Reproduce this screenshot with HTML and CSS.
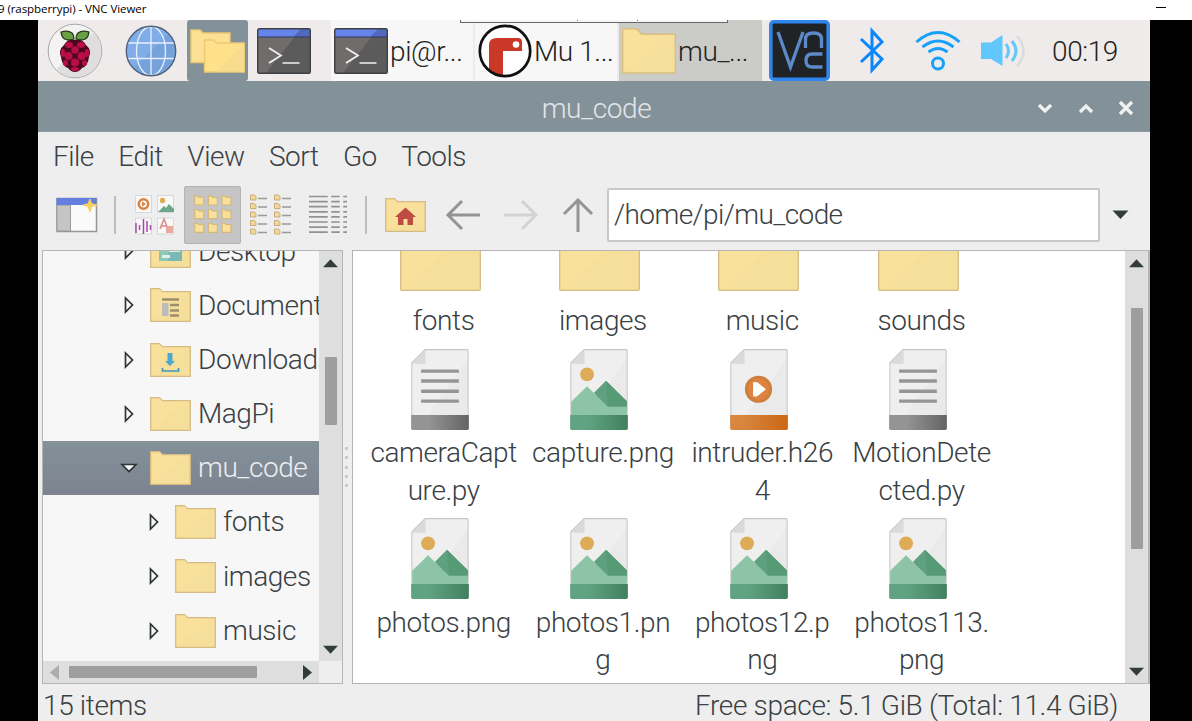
FILE: index.html
```
<!DOCTYPE html>
<html lang="en">
<head>
<meta charset="utf-8">
<title>VNC Viewer</title>
<link rel="stylesheet" href="styles.css">
</head>
<body>
<svg class="defs" width="0" height="0" aria-hidden="true">
  <defs>
    <linearGradient id="gFolder" x1="0" y1="0" x2="1" y2="1"><stop offset=".5" stop-color="#fae19b"/><stop offset=".5" stop-color="#f6de9b"/></linearGradient>
    <linearGradient id="gPage" x1="0" y1="0" x2="1" y2="1"><stop offset=".55" stop-color="#efefef"/><stop offset=".56" stop-color="#eaeaea"/></linearGradient>
    <linearGradient id="gGrey"><stop offset=".3" stop-color="#949494"/><stop offset="1" stop-color="#646464"/></linearGradient>
    <linearGradient id="gGreen"><stop offset=".3" stop-color="#60a382"/><stop offset="1" stop-color="#41805d"/></linearGradient>
    <linearGradient id="gOrange"><stop offset=".2" stop-color="#d88640"/><stop offset="1" stop-color="#cc6715"/></linearGradient>
  </defs>
  <symbol id="folder" viewBox="0 0 41 34"><path d="M.7 33.3V.7H9.500l3 3h27.800v29.600z" fill="url(#gFolder)" stroke="#d5bc85" stroke-width="1.300"/><path d="M1.500 1.500h8l3 3" fill="none" stroke="#efd58c"/></symbol>
  <symbol id="bigfolder" viewBox="0 0 81 69"><path d="M.7 2Q.7.700 2 .700H20l6 6H79q1.300 0 1.300 1.300V67q0 1.300-1.300 1.300H2Q.7 68.300.7 67z" fill="url(#gFolder)" stroke="#d5bc85" stroke-width="1.300"/></symbol>
  <symbol id="page" viewBox="0 0 58 82"><path d="M.6 14 14 .6H56q1.400 0 1.400 1.400V80H.6z" fill="url(#gPage)" stroke="#c6c6c6" stroke-width="1.200"/><path d="M1 14.500 14.500 1v14z" fill="#dadada"/></symbol>
  <symbol id="doc" viewBox="0 0 58 82"><use href="#page"/><path d="M10 22.200h38M10 32.200h38M10 42.500h38M10 52.500h38" stroke="#959595" stroke-width="3.300"/><path d="M0 66.500h58V80q0 1.500-1.500 1.500H1.500Q0 81.500 0 80z" fill="url(#gGrey)"/></symbol>
  <symbol id="image" viewBox="0 0 58 82"><use href="#page"/><circle cx="17" cy="25.500" r="7" fill="#deab56"/><path d="m24 44 12-12 21 20.500V62H36z" fill="#5fa07f"/><path d="m36 32 21 20.500V58H38z" fill="#569a76"/><path d="M1 53 17 37.500 38 58h19v9H1z" fill="#8dc3a7"/><path d="M0 66.500h58V80q0 1.500-1.500 1.500H1.500Q0 81.500 0 80z" fill="url(#gGreen)"/></symbol>
  <symbol id="video" viewBox="0 0 58 82"><use href="#page"/><circle cx="28.500" cy="40.500" r="12.200" fill="#df8340" stroke="#cf7f3c" stroke-width="3"/><path d="M23 33.500q3-1 5 .5l8 6.500-8 6.500q-2 1.500-5 .5z" fill="#fff"/><path d="M0 66.500h58V80q0 1.500-1.500 1.500H1.500Q0 81.500 0 80z" fill="url(#gOrange)"/></symbol>
  <symbol id="terminal" viewBox="0 0 54 46"><rect x=".7" y=".7" width="52.600" height="44.600" rx="1.500" fill="#5b5b5b"/><path d="M1 9V1h43L9 45H1z" fill="#716c6c"/><path d="M1 1h52v8H1z" fill="#6685ea"/><path d="M44 1h9v8H36z" fill="#5068bd"/><path d="M1 9h52" stroke="#34395c"/><rect x=".7" y=".7" width="52.600" height="44.600" rx="1.500" fill="none" stroke="#3f4045" stroke-width="1.400"/><path d="m12 20 12 7.500L12 35M25.500 35h17" fill="none" stroke="#f2f2f2" stroke-width="1.700"/></symbol>
  <symbol id="closed" viewBox="0 0 10 18"><path d="M1.500 2v14L8.500 9z" fill="#f7f7f7" stroke="#2d3536" stroke-width="1.700"/></symbol>
  <symbol id="tri" viewBox="0 0 16 9"><path d="M0 .5h16L8 9z" fill="#333c3d"/></symbol>
</svg>

<header class="titlebar"><span>9 (raspberrypi) - VNC Viewer</span><i class="minimise"></i></header>
<main class="screen">
  <nav class="taskbar">
    <div class="launch menu-btn"><svg width="56" height="56" viewBox="0 0 56 56"><circle cx="28" cy="28" r="26.800" fill="#f3f3f3" stroke="#a8a8a8"/><path d="M46.500 9A26.300 26.300 0 0 1 9 46.500z" fill="#dedede"/><path d="M27 16q-9 3-12-3l-1-4q7-2 11 1 2 2 2 6zM29 16q9 3 12-3l1-4q-7-2-11 1-2 2-2 6z" fill="#69a044" stroke="#27391d" stroke-width="1.300"/><path d="M28 17q8-1 11 5 6 5 3 12-1 9-7 11-3 4-7 4t-7-4q-6-2-7-11-3-7 3-12 3-6 11-5z" fill="#4c0820"/><g fill="#b90e45"><ellipse cx="22" cy="22" rx="4" ry="3"/><ellipse cx="34" cy="22" rx="4" ry="3"/><circle cx="28" cy="27" r="3.700"/><ellipse cx="16" cy="30" rx="2.300" ry="4"/><ellipse cx="40" cy="30" rx="2.300" ry="4"/><circle cx="21.500" cy="33" r="4"/><circle cx="34.500" cy="33" r="4"/><circle cx="28" cy="39.500" r="4"/><ellipse cx="18.500" cy="40" rx="2.500" ry="3"/><ellipse cx="37.500" cy="40" rx="2.500" ry="3"/><ellipse cx="28" cy="46" rx="4" ry="2"/></g></svg></div>
    <div class="launch web-btn"><svg width="52" height="52" viewBox="0 0 52 52"><circle cx="26" cy="26" r="24.700" fill="#80ade9"/><path d="M43.500 8.500A24.700 24.700 0 0 1 8.500 43.500z" fill="#75a2da"/><g fill="none" stroke="#e6f0fc" stroke-width="1.300"><path d="M26 1v50M3 18h46M3 33.500h46"/><ellipse cx="26" cy="26" rx="14.500" ry="24.500"/></g><circle cx="26" cy="26" r="24.700" fill="none" stroke="#50627a" stroke-width="1.400"/></svg></div>
    <div class="launch files-btn"><svg width="55" height="44" viewBox="0 0 55 44"><path d="M1 33.500V1h9l3 3h27v29.500z" fill="#fce094" stroke="#edc873" stroke-width="1.400"/><path d="M14.500 43V11h9l3 3h28v29z" fill="#ffe18c" stroke="#edc873" stroke-width="1.400"/><path d="M54 15v27.500H26z" fill="#f6dc8c"/></svg></div>
    <div class="launch term-btn"><svg width="54" height="46"><use href="#terminal"/></svg></div>
    <div class="task"><svg width="54" height="46"><use href="#terminal"/></svg><span>pi@r...</span></div>
    <div class="task task-mu"><svg width="54" height="54" viewBox="0 0 54 54"><circle cx="27" cy="27" r="25.200" fill="#fff"/><path d="M11 47V21q0-7 8-7h21q4 0 4 4v9H25V52q-8 0-14-5z" fill="#ca3828"/><circle cx="38" cy="20.500" r="3.300" fill="#fff"/><circle cx="27" cy="27" r="25.200" fill="none" stroke="#101010" stroke-width="2.700"/></svg><span>Mu 1...</span></div>
    <div class="task active"><svg width="54" height="46" viewBox="0 0 54 46"><path d="M.7 45V.7h14l5 5.500h33.600V45z" fill="url(#gFolder)" stroke="#d9c07f" stroke-width="1.400"/></svg><span>mu_...</span></div>
    <svg class="vnc" width="61" height="61" viewBox="0 0 61 61"><rect x="1.800" y="1.800" width="57.400" height="57.400" rx="3" fill="#202326" stroke="#2f86ec" stroke-width="3.600"/><g fill="none" stroke="#5c8ac8" stroke-width="3.300"><path d="m9 12 12.500 35L34 12"/><path d="M36.500 28V19q0-6 8-6t8 6v9M53.500 34H43q-6 0-6 6.500t6 6.500h10.500"/></g></svg>
    <svg class="bt" width="26" height="48" viewBox="0 0 26 48"><path d="m2 12 21 20-10 11V4l10 11L2 35" fill="none" stroke="#0c86fb" stroke-width="3"/></svg>
    <svg class="wifi" width="46" height="41" viewBox="0 0 46 41"><g fill="none" stroke="#16a0fa" stroke-width="3"><path d="M1.500 12Q23-7 44.500 12M7.500 17q15.500-12 31 0M13.500 22q9.500-7 19 0"/><circle cx="23" cy="33.500" r="5.500"/></g></svg>
    <svg class="sound" width="46" height="34" viewBox="0 0 46 34"><path d="M1 8.500h10L22.500 1v31L11 25H1z" fill="#62c7fc"/><path d="M26 10q5 7 0 14M32 7q8 10 0 20" fill="none" stroke="#62c7fc" stroke-width="3"/><path d="M37 2q13 15 0 30" fill="none" stroke="#d8dcde" stroke-width="2.500"/></svg>
    <span class="clock">00:19</span>
    <div class="viewer-tab"><i></i><i></i></div>
  </nav>

  <section class="window">
    <header class="window-title"><h1>mu_code</h1>
      <svg class="controls" width="100" height="18" viewBox="0 0 100 18" fill="none" stroke="#f0f2f2" stroke-width="3.300"><path d="m2 6 6 6 6-6M43 13l6-6 6 6M83 3l12 12M95 3 83 15"/></svg>
    </header>
    <nav class="menubar"><span>File</span><span>Edit</span><span>View</span><span>Sort</span><span>Go</span><span>Tools</span></nav>

    <div class="toolbar">
      <svg width="42" height="36" viewBox="0 0 42 36"><rect x="1" y="1.500" width="39.500" height="33" fill="#fafafa" stroke="#969696" stroke-width="1.500"/><path d="M1 8h13.500v26H1z" fill="#c5c5c5" stroke="#989898"/><path d="M.5 1h40v7h-40z" fill="#6380e0"/><path d="m34 2 1.700 4.800L41 8l-5.300 1.500L34 15l-2-5.500L27 8l5-1.200z" fill="#f6d15e" stroke="#f6d15e"/></svg>
      <i class="sep s1"></i>
      <svg class="thumbs" width="40" height="40" viewBox="0 0 40 40"><g fill="#f8f8f8" stroke="#d8d8d8"><path d="M.5.500h16v17H.500zM22.500.500h16v17h-16zM.500 23h16v16H.500zM22.500 23h16v16h-16z"/></g><circle cx="8.500" cy="9" r="4.700" fill="none" stroke="#da8341" stroke-width="2.500"/><path d="m7 6.500 4 2.500-4 2.500z" fill="#da8341"/><circle cx="27.500" cy="5.500" r="2.700" fill="#e0ad55"/><path d="m23 17 6-6 2 2 3-4 5 5v3z" fill="#69a888"/><path d="M1 28v10M4.500 30v5M8.500 24v15M12 26v11M15.500 30v5" stroke="#a34aa6" stroke-width="1.500"/><path d="m25 34 4-10 4 10M26 31h6" fill="none" stroke="#d88989" stroke-width="1.500"/><rect x="31" y="31" width="7" height="7" fill="#e6aaa0"/></svg>
      <div class="view-on"><svg width="38" height="39" viewBox="0 0 38 39"><defs><path id="mini" d="M.7.800h3l1 1.400h5V10H.7z" fill="#f8e09b" stroke="#d3b77d" stroke-width="1.200"/></defs><use href="#mini"/><use href="#mini" x="13.700"/><use href="#mini" x="27.300"/><use href="#mini" y="13.700"/><use href="#mini" x="13.700" y="13.700"/><use href="#mini" x="27.300" y="13.700"/><use href="#mini" y="27.300"/><use href="#mini" x="13.700" y="27.300"/><use href="#mini" x="27.300" y="27.300"/></svg></div>
      <svg class="compact" width="42" height="41" viewBox="0 0 42 41"><g fill="#f0d99a" stroke="#c7ad78"><path id="col" d="M.5 1H4l2 1.500V6H.500zM.500 9.500H4L6 11v3.500H.500zM.500 18H4l2 1.500V23H.500zM.500 26.500H4L6 28v3.500H.500zM.500 35H4l2 1.500V40H.500z"/><use href="#col" x="24"/></g><path d="M8 4.500h9M8 13h9M8 21.500h9M8 30h9M8 38.500h9M32 4.500h9M32 13h9M32 21.500h9M32 30h9M32 38.500h9" stroke="#9b9b9b" stroke-width="1.500"/></svg>
      <svg class="details" width="38" height="39" viewBox="0 0 38 39"><path d="M0 1.500h38M0 6.600h38M0 11.700h38M0 16.800h38M0 21.900h38M0 27h38M0 32.100h38M0 37.200h38" stroke="#929292" stroke-width="1.700"/><path d="M20.500 0v39M32.500 0v39" stroke="#eee" stroke-width="3.500"/></svg>
      <i class="sep s2"></i>
      <svg class="home" width="41" height="34" viewBox="0 0 41 34"><use href="#folder"/><path d="m10 19 10.500-9.500L31 19h-3v8h-5.500v-6h-4v6H13v-8z" fill="#bd4c43"/></svg>
      <svg class="back" width="36" height="32" viewBox="0 0 36 32"><path d="M17 2 3 16l14 14M3 16h32" fill="none" stroke="#949494" stroke-width="3"/></svg>
      <svg class="forward" width="36" height="32" viewBox="0 0 36 32"><path d="m19 2 14 14-14 14M33 16H1" fill="none" stroke="#d3d3d3" stroke-width="3"/></svg>
      <svg class="up" width="32" height="36" viewBox="0 0 32 36"><path d="M2 17 16 3l14 14M16 3v32" fill="none" stroke="#949494" stroke-width="3"/></svg>
      <div class="address">/home/pi/mu_code</div>
      <svg class="drop" width="17" height="9"><use href="#tri"/></svg>
    </div>

    <div class="panes">
      <aside class="side">
        <div class="tree-view"><ul class="tree">
          <li><svg class="arrow"><use href="#closed"/></svg><svg class="fold" viewBox="0 0 41 34"><use href="#folder"/><rect x="9" y="10" width="23" height="17" fill="#8dc9b2"/><path d="M18 14h14v13H18z" fill="#78b9b7"/><path d="M19 10h11v8H19zM12 21h8v3h-8z" fill="#e0f0e5"/></svg><span>Desktop</span></li>
          <li><svg class="arrow"><use href="#closed"/></svg><svg class="fold" viewBox="0 0 41 34"><use href="#folder"/><path d="M12 11.500h17M20 17h9M20 22.500h9M20 27.500h9" stroke="#9a8e6d" stroke-width="2.500"/><path d="M12 15h6.500v13H12z" fill="#bcbcbc"/></svg><span>Documents</span></li>
          <li><svg class="arrow"><use href="#closed"/></svg><svg class="fold" viewBox="0 0 41 34"><use href="#folder"/><path d="M17.500 10h5v8h2.500l-5 5-5-5h2.500z" fill="#4ba9d0"/><path d="M12.500 25v3h16v-3" fill="none" stroke="#4099ba" stroke-width="1.700"/></svg><span>Downloads</span></li>
          <li><svg class="arrow"><use href="#closed"/></svg><svg class="fold"><use href="#folder"/></svg><span>MagPi</span></li>
          <li class="selected"><svg class="arrow-open" viewBox="0 0 18 10"><path d="M2 1.500h14l-7 7z" fill="#f7f7f7" stroke="#2d3536" stroke-width="1.700"/></svg><svg class="fold"><use href="#folder"/></svg><span>mu_code</span></li>
          <li class="child"><svg class="arrow"><use href="#closed"/></svg><svg class="fold"><use href="#folder"/></svg><span>fonts</span></li>
          <li class="child"><svg class="arrow"><use href="#closed"/></svg><svg class="fold"><use href="#folder"/></svg><span>images</span></li>
          <li class="child"><svg class="arrow"><use href="#closed"/></svg><svg class="fold"><use href="#folder"/></svg><span>music</span></li>
        </ul></div>
        <div class="vscroll"><svg class="flip" width="15" height="9"><use href="#tri"/></svg><i class="thumb side-thumb"></i><svg class="end" width="15" height="9"><use href="#tri"/></svg></div>
        <div class="hscroll"><svg width="9" height="15" viewBox="0 0 9 15"><path d="M9 0v15L0 7.500z" fill="#acacac"/></svg><i></i><svg class="end" width="9" height="15" viewBox="0 0 9 15"><path d="M0 0v15l9-7.500z" fill="#333c3d"/></svg></div>
      </aside>
      <div class="grip"><i></i><i></i><i></i><i></i><i></i></div>
      <section class="files">
        <div class="file-view"><div class="grid">
          <figure><svg class="big"><use href="#bigfolder"/></svg><figcaption>fonts</figcaption></figure>
          <figure><svg class="big"><use href="#bigfolder"/></svg><figcaption>images</figcaption></figure>
          <figure><svg class="big"><use href="#bigfolder"/></svg><figcaption>music</figcaption></figure>
          <figure><svg class="big"><use href="#bigfolder"/></svg><figcaption>sounds</figcaption></figure>
          <figure><svg class="paper"><use href="#doc"/></svg><figcaption>cameraCapt<br>ure.py</figcaption></figure>
          <figure><svg class="paper"><use href="#image"/></svg><figcaption>capture.png</figcaption></figure>
          <figure><svg class="paper"><use href="#video"/></svg><figcaption>intruder.h26<br>4</figcaption></figure>
          <figure><svg class="paper"><use href="#doc"/></svg><figcaption>MotionDete<br>cted.py</figcaption></figure>
          <figure><svg class="paper"><use href="#image"/></svg><figcaption>photos.png</figcaption></figure>
          <figure><svg class="paper"><use href="#image"/></svg><figcaption>photos1.pn<br>g</figcaption></figure>
          <figure><svg class="paper"><use href="#image"/></svg><figcaption>photos12.p<br>ng</figcaption></figure>
          <figure><svg class="paper"><use href="#image"/></svg><figcaption>photos113.<br>png</figcaption></figure>
        </div></div>
        <div class="vscroll"><svg class="flip" width="15" height="9"><use href="#tri"/></svg><i class="thumb main-thumb"></i><svg class="end" width="15" height="9"><use href="#tri"/></svg></div>
      </section>
    </div>
    <footer class="status"><span>15 items</span><span class="free">Free space: 5.1 GiB (Total: 11.4 GiB)</span></footer>
  </section>
</main>
</body>
</html>
```
FILE: styles.css
```
* { box-sizing: border-box; }
body { margin: 0; width: 1192px; height: 721px; overflow: hidden; background: #000; color: #394043; font: 300 28px/37.500px Roboto, sans-serif; letter-spacing: -.4px; white-space: nowrap; }
svg { display: block; flex: none; }
.defs { position: absolute; }
.titlebar { display: flex; justify-content: space-between; height: 20px; background: #fff; color: #000; font: 400 11.500px/18px "Open Sans", sans-serif; }
.titlebar span { margin-left: -2px; letter-spacing: -.07px; }
.minimise { width: 10px; height: 1px; background: #000; margin: 7px 26px 0 0; }
.screen { width: 1112px; height: 701px; margin-left: 38px; background: #eee; overflow: hidden; }

.taskbar { position: relative; display: flex; align-items: center; height: 61px; background: #eeebea; color: #222; }
.launch { display: flex; align-items: center; justify-content: center; height: 61px; flex: none; }
.launch svg, .task svg { margin-top: 1px; }
.menu-btn { width: 74px; }
.web-btn { width: 75px; padding-left: 3px; }
.files-btn { width: 61px; background: #839199; border-radius: 3px; }
.term-btn { width: 71px; margin-right: 12px; }
.task { display: flex; align-items: center; width: 142px; height: 61px; padding-left: 3px; gap: 2px; flex: none; margin-right: 2px; background: #f7f7f7; overflow: hidden; }
.task-mu { margin-right: 2px; }
.active { width: 143px; margin-right: 7px; background: #cbccc7; }
.task span { line-height: 61px; margin-top: 1px; }
.bt { margin-left: 29px; }
.wifi { margin-left: 30px; }
.sound { margin-left: 19px; }
.clock { margin: 2px 0 0 26px; }
.viewer-tab { position: absolute; left: 422px; top: 0; display: flex; justify-content: flex-end; width: 268px; height: 3px; border: 1px solid #666; border-top: 0; background: #f7f7f7; }
.viewer-tab i { width: 1px; height: 1px; margin-right: 59px; background: #777; }
.viewer-tab i:last-child { margin-right: 89px; }

.window { width: 1112px; }
.window-title { display: grid; grid-template-columns: 1fr auto 1fr; align-items: center; height: 51px; background: #839199; border-bottom: 1px solid #8b9da8; color: #e3e6e8; }
.window-title h1 { grid-column: 2; margin: 5px 0 0 5px; font-size: 28px; font-weight: 300; line-height: 45px; }
.controls { justify-self: end; margin: 3px 13px 0 0; }
.menubar { display: flex; gap: 24.500px; height: 49px; padding-left: 15px; line-height: 49px; letter-spacing: -.5px; }
.toolbar { display: flex; align-items: center; height: 69px; padding: 0 0 2px 18px; }
.sep { width: 2px; height: 38px; background: #bdbdbd; }
.s1 { margin-left: 16px; }
.thumbs { margin-left: 19px; }
.view-on { display: grid; place-items: center; width: 57px; height: 58px; margin-left: 9px; border: 1px solid #b4b4b4; border-radius: 2px; background: #c5c5c5; }
.compact { margin-left: 9px; }
.details { margin-left: 17px; }
.s2 { margin-left: 18px; }
.home { margin-left: 18px; }
.back { margin-left: 19px; }
.forward { margin-left: 22px; }
.up { margin-left: 23px; }
.address { width: 493px; height: 54px; margin-left: 13px; padding-left: 5px; border: 2px solid #c8c8c8; border-radius: 2px; background: #fff; line-height: 50px; letter-spacing: -.6px; }
.drop { margin-left: 12px; }

.panes { display: flex; height: 434px; padding-left: 4px; }
.side { display: grid; grid-template: 1fr 22px / 1fr 23px; width: 301px; height: 434px; border: 1px solid #b5b5b5; background: #eee; }
.tree-view { overflow: hidden; background: #f7f7f7; }
.tree { margin: -26.800px 0 0; padding: 0; list-style: none; }
.tree li { display: flex; align-items: center; height: 54.200px; padding-left: 81px; }
.tree li.child { padding-left: 106px; }
.tree li.selected { padding-left: 77px; background: linear-gradient(#839199, #7d8390); color: #eceef0; }
.arrow { width: 10px; height: 18px; margin-right: 16px; }
.arrow-open { width: 18px; height: 10px; margin-right: 12px; }
.fold { width: 41px; height: 34px; margin-right: 7px; }
.tree span { letter-spacing: -.45px; }
.vscroll { display: flex; flex-direction: column; align-items: center; width: 23px; padding: 8px 0 7px; background: #dedede; }
.flip { transform: scaleY(-1); }
.end { margin-top: auto; }
.thumb { width: 12px; background: #9e9e9e; border-radius: 1px; }
.side-thumb { height: 68px; margin-top: 89px; }
.main-thumb { height: 241px; margin-top: 40px; }
.hscroll { display: flex; align-items: center; padding: 0 7px; background: #dedede; }
.hscroll i { width: 188px; height: 12px; margin-left: 10px; background: #9e9e9e; border-radius: 1px; }
.hscroll .end { margin: 0 0 0 auto; }
.grip { display: flex; flex-direction: column; justify-content: center; gap: 6.300px; width: 9px; padding: 0 0 0 2px; }
.grip i { width: 3px; height: 3px; background: #ccc; }
.files { display: flex; width: 798px; height: 434px; border: 1px solid #b5b5b5; border-right-width: 2px; background: #fff; }
.file-view { flex: 1; overflow: hidden; }
.grid { display: grid; grid-template-columns: repeat(4, 159.300px); grid-template-rows: 123px 160px 160px; row-gap: 9.500px; margin: -35px 0 0 11px; }
.grid figure { display: flex; flex-direction: column; align-items: center; margin: 0; }
.grid figcaption { margin-top: 4px; text-align: center; }
.big { width: 81px; height: 69px; margin: 6px 7px 6.500px 0; }
.paper { width: 58px; height: 81.500px; margin-right: 7px; }
.status { display: flex; justify-content: space-between; height: 37px; padding: 3px 32px 0 5px; letter-spacing: -.34px; }
```
